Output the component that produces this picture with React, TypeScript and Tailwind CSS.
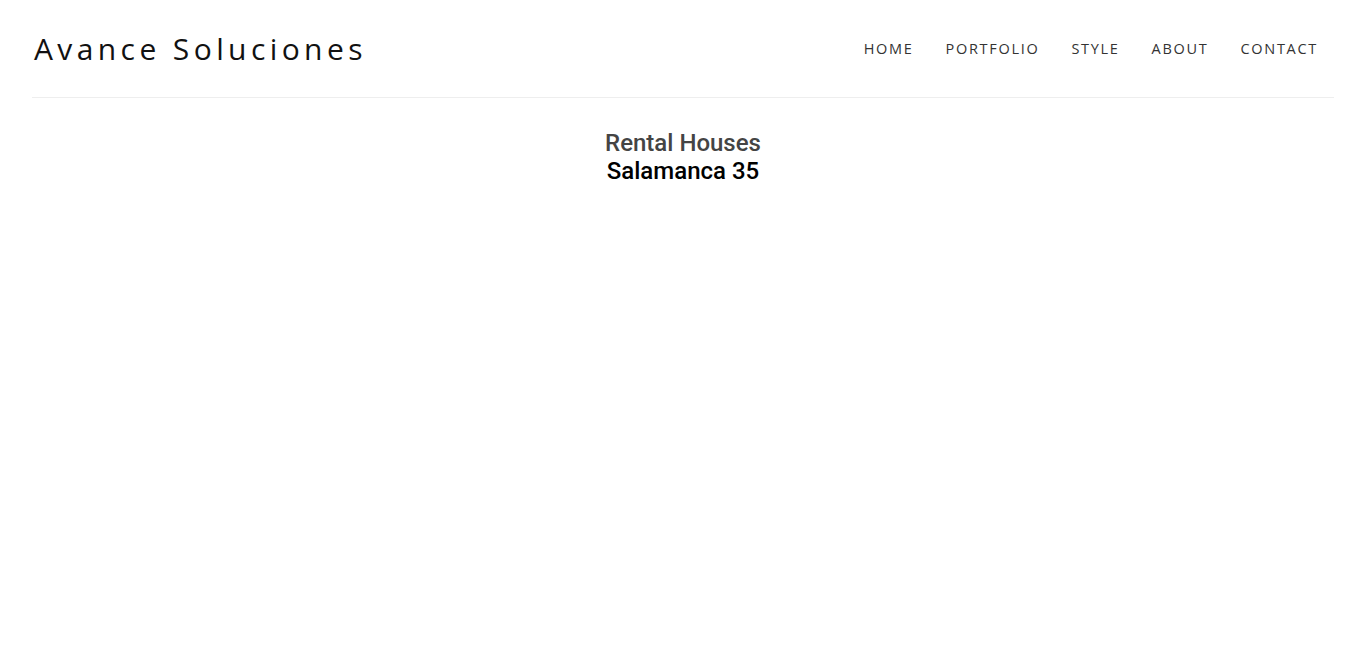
import React from 'react';

const links = ['HOME', 'PORTFOLIO', 'STYLE', 'ABOUT', 'CONTACT'];

const App: React.FC = () => {
  return (
    <div className="min-h-screen bg-white">
      <header className="px-8">
        <div className="flex items-center justify-between h-[98px] border-b border-[#eeeeee]">
          <h1 className="pl-[2px] text-[30px] tracking-[4.4px] text-[#111] font-['Open_Sans',sans-serif] font-normal">
            Avance Soluciones
          </h1>
          <nav className="flex">
            {links.map((l) => (
              <a
                key={l}
                href="#"
                className="px-4 text-[14.5px] tracking-[1.7px] text-[#333] font-['Open_Sans',sans-serif]"
              >
                {l}
              </a>
            ))}
          </nav>
        </div>
      </header>
      <main className="pt-[31px] text-center font-['Roboto',sans-serif] font-medium text-[24px] leading-[28px]">
        <h2 className="text-[#444]">Rental Houses</h2>
        <p className="text-black">Salamanca 35</p>
      </main>
    </div>
  );
};

export default App;
